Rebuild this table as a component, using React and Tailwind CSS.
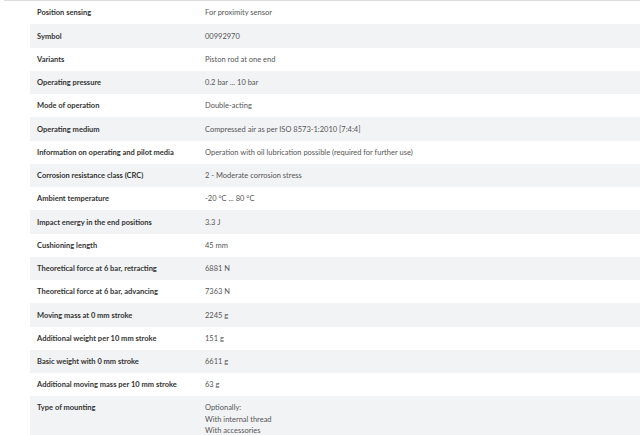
const rows = [
  ["Position sensing", ["For proximity sensor"]],
  ["Symbol", ["00992970"]],
  ["Variants", ["Piston rod at one end"]],
  ["Operating pressure", ["0.2 bar ... 10 bar"]],
  ["Mode of operation", ["Double-acting"]],
  ["Operating medium", ["Compressed air as per ISO 8573-1:2010 [7:4:4]"]],
  ["Information on operating and pilot media", ["Operation with oil lubrication possible (required for further use)"]],
  ["Corrosion resistance class (CRC)", ["2 - Moderate corrosion stress"]],
  ["Ambient temperature", ["-20 °C ... 80 °C"]],
  ["Impact energy in the end positions", ["3.3 J"]],
  ["Cushioning length", ["45 mm"]],
  ["Theoretical force at 6 bar, retracting", ["6881 N"]],
  ["Theoretical force at 6 bar, advancing", ["7363 N"]],
  ["Moving mass at 0 mm stroke", ["2245 g"]],
  ["Additional weight per 10 mm stroke", ["151 g"]],
  ["Basic weight with 0 mm stroke", ["6611 g"]],
  ["Additional moving mass per 10 mm stroke", ["63 g"]],
  ["Type of mounting", ["Optionally:", "With internal thread", "With accessories"]],
];

export default function App() {
  return (
    <div className="w-[640px] h-[435px] overflow-hidden bg-white font-['Lato',sans-serif]">
      <div className="border-t border-[#dcdcdc] ml-[4px]">
        <div className="ml-[26px]">
          {rows.map(([label, values], i) => (
            <div
              key={label}
              className={`flex ${values.length > 1 ? "items-start pt-[6px] pb-[6px]" : "items-center h-[23.25px] pt-[1px]"} ${i % 2 === 1 ? "bg-[#f2f3f5]" : "bg-white"}`}
            >
              <div className="w-[175px] pl-[7px] text-[7.5px] font-bold text-[#333333] leading-[11.5px]">
                {label}
              </div>
              <div className="flex-1 text-[7.5px] text-[#555555] leading-[11.5px]">
                {values.map((v) => (
                  <div key={v}>{v}</div>
                ))}
              </div>
            </div>
          ))}
        </div>
      </div>
    </div>
  );
}
